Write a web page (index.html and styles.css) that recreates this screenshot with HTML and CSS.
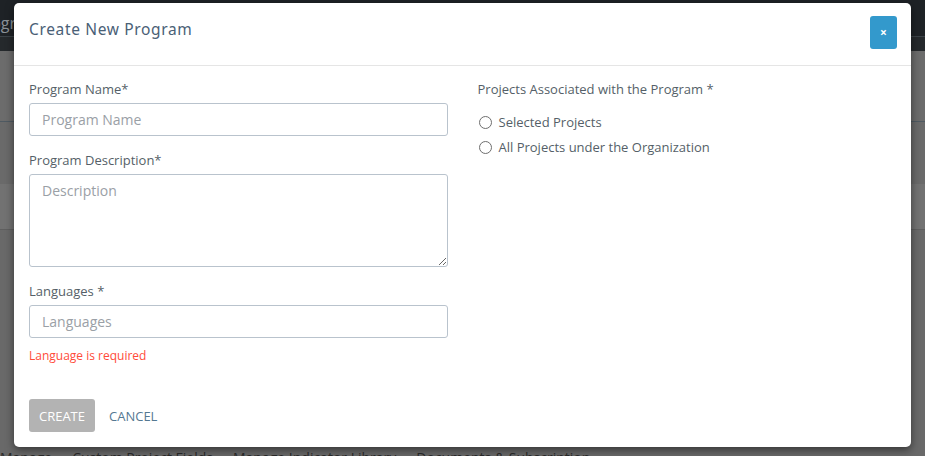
FILE: index.html
```html
<!DOCTYPE html>
<html>
<head>
<meta charset="utf-8">
<link rel="stylesheet" href="styles.css">
</head>
<body>
<div class="page">
  <div class="topbar"><span class="brand">Program</span></div>
  <div class="sub1"></div>
  <div class="sub2"></div>
  <div class="band"></div>
  <div class="content"></div>
  <div class="tabs">
    <span>Manage</span><span>Custom Project Fields</span><span>Manage Indicator Library</span><span>Documents &amp; Subscription</span>
  </div>
</div>

<div class="modal">
  <div class="modal-header">
    <h4 class="modal-title">Create New Program</h4>
    <button class="close-btn" type="button">×</button>
  </div>
  <div class="modal-body">
    <div class="col">
      <div class="field">
        <label class="lbl">Program Name*</label>
        <input class="ctl" type="text" placeholder="Program Name">
      </div>
      <div class="field">
        <label class="lbl">Program Description*</label>
        <textarea class="ctl area" placeholder="Description"></textarea>
      </div>
      <div class="field last">
        <label class="lbl">Languages *</label>
        <input class="ctl" type="text" placeholder="Languages">
        <div class="err">Language is required</div>
      </div>
    </div>
    <div class="col">
      <label class="lbl">Projects Associated with the Program *</label>
      <div class="radios">
        <label class="radio"><span class="dot"></span>Selected Projects</label>
        <label class="radio"><span class="dot"></span>All Projects under the Organization</label>
      </div>
    </div>
  </div>
  <div class="modal-footer">
    <button class="btn-create" type="button">CREATE</button>
    <button class="btn-cancel" type="button">CANCEL</button>
  </div>
</div>
</body>
</html>
```

FILE: styles.css
```css
* { box-sizing: border-box; }
html, body { margin: 0; padding: 0; }
body {
  width: 925px;
  height: 456px;
  overflow: hidden;
  font-family: "Open Sans", "Noto Sans", sans-serif;
  background: #676767;
  position: relative;
}
.page { display: flex; flex-direction: column; height: 456px; }
.topbar {
  height: 37px;
  background: #1e2226;
  border-bottom: 1px solid #3b4247;
  color: #8b9298;
  font-size: 16px;
  padding-top: 12px;
  display: flex;
  align-items: flex-start;
  overflow: hidden;
}
.brand { margin-left: -25px; }
.sub1 { height: 14px; background: #25292c; }
.sub2 { height: 71px; background: #6c6c6c; border-bottom: 1px solid #4f5a62; }
.band { height: 62px; background: #6a6a6a; }
.content {
  height: 46px;
  background: #727272;
  border-bottom: 1px solid #5f5f5f;
}
.tabs {
  flex: 1;
  background: #696969;
  display: flex;
  align-items: flex-end;
  gap: 20px;
  padding-left: 0;
  font-size: 14px;
  color: #2a2a2a;
  line-height: 1;
  margin-bottom: -9px;
  overflow: hidden;
}

.modal {
  position: absolute;
  left: 14px;
  top: 3px;
  width: 897px;
  height: 444px;
  background: #fff;
  border-radius: 5px;
  box-shadow: 0 3px 9px rgba(0,0,0,0.5);
  display: flex;
  flex-direction: column;
}
.modal-header {
  height: 63px;
  border-bottom: 1px solid #e5e5e5;
  display: flex;
  justify-content: space-between;
  align-items: flex-start;
  padding: 13px 14px 0 15px;
}
.modal-title {
  margin: 2px 0 0 0;
  font-family: "Noto Sans", "Open Sans", sans-serif;
  font-weight: 400;
  font-size: 15.5px;
  letter-spacing: 0.65px;
  color: #4a6076;
}
.close-btn {
  width: 27px;
  height: 33px;
  background: #3399cc;
  border: none;
  border-radius: 3px;
  color: #fff;
  font-size: 12px;
  font-weight: 700;
  padding: 0;
  line-height: 33px;
  font-family: "Open Sans", sans-serif;
}
.modal-body {
  display: flex;
  padding: 14px 0 0 0;
}
.col {
  width: 448.5px;
  padding: 0 15px;
  display: flex;
  flex-direction: column;
}
.field { display: flex; flex-direction: column; margin-bottom: 15px; }
.field.last { margin-bottom: 0; }
.lbl {
  font-size: 13px;
  line-height: 18px;
  color: #555f68;
  margin-bottom: 5px;
}
.ctl {
  height: 33px;
  width: 100%;
  border: 1px solid #b9c3cd;
  border-radius: 3px;
  padding: 6px 12px;
  font-family: "Open Sans", sans-serif;
  font-size: 14px;
  color: #555;
  background: #fff;
  outline: none;
}
.ctl::placeholder { color: #9aa0a6; }
.area { height: 93px; resize: vertical; }
.err {
  margin-top: 9px;
  font-size: 12px;
  line-height: 17px;
  color: #ff4b3a;
}
.radios { display: flex; flex-direction: column; gap: 7px; margin-top: 10px; }
.radio {
  display: flex;
  align-items: center;
  font-size: 13px;
  line-height: 18px;
  color: #555f68;
}
.dot {
  width: 13px;
  height: 13px;
  border: 1px solid #6e6e6e;
  border-radius: 50%;
  margin-right: 7px;
  margin-left: 1px;
  background: #fff;
}
.modal-footer {
  margin-top: auto;
  padding: 0 15px 15px 15px;
  display: flex;
  align-items: center;
}
.btn-create {
  width: 66px;
  height: 33px;
  background: #b3b3b3;
  border: none;
  border-radius: 3px;
  color: #fff;
  font-family: "Open Sans", sans-serif;
  font-size: 13px;
  padding: 0;
}
.btn-cancel {
  margin-left: 14px;
  background: none;
  border: none;
  padding: 0;
  font-family: "Open Sans", sans-serif;
  font-size: 13px;
  color: #557892;
}
```
